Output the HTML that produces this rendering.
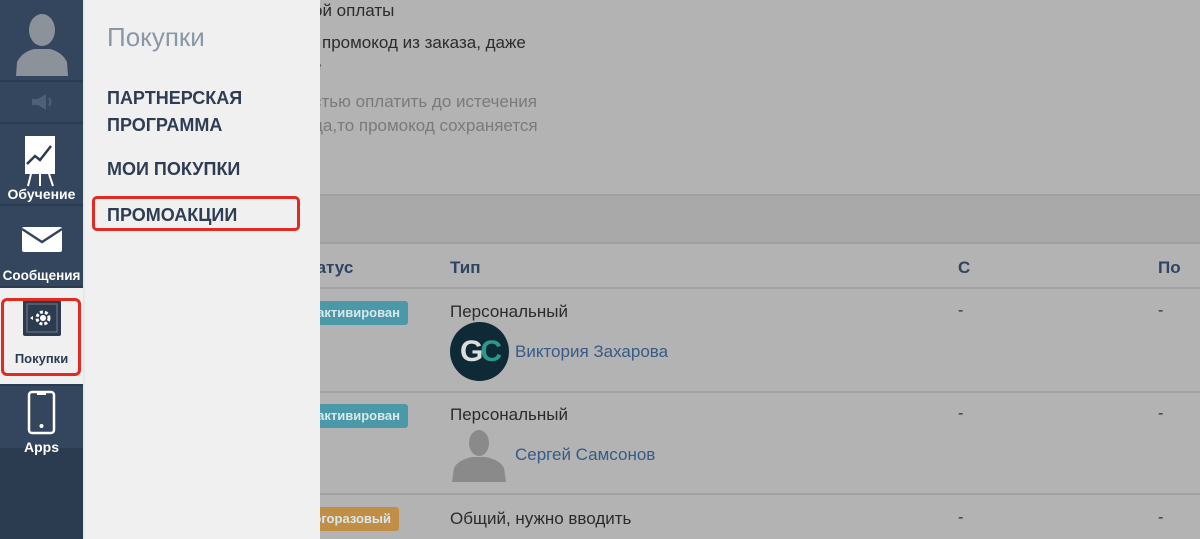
<!DOCTYPE html>
<html><head><meta charset="utf-8"><style>
*{margin:0;padding:0;box-sizing:border-box}
body{width:1200px;height:539px;overflow:hidden;background:#b3b3b3;font-family:"Liberation Sans",sans-serif;position:relative;color:#2b2b2b}
.a{position:absolute;white-space:nowrap}
.t{font-size:17px}
.g{color:#7a7a7a}
.hl{position:absolute;left:0;right:0;height:2px;background:#a2a2a2}
.badge{position:absolute;height:24px;border-radius:3px;color:#d8e8ec;font-weight:bold;font-size:13px;line-height:24px;padding:0 8px 0 0;text-align:right}
.h{color:#2d4563;font-weight:bold;font-size:17px}
#side{position:absolute;left:0;top:0;width:83px;height:539px;background:#2c3c50}
.si{position:absolute;left:0;width:83px;background:#33465d;text-align:center;color:#fff;font-weight:bold;font-size:14px}
#panel{position:absolute;left:83px;top:0;width:237px;height:539px;background:#f0f0f0;border-left:2px solid #e8e8e8}
.m{position:absolute;left:22px;font-weight:bold;font-size:18px;color:#2e3d52}
</style></head><body>
<div class="a t" style="left:313px;top:1px">ой оплаты</div>
<div class="a t" style="left:322px;top:33px">промокод из заказа, даже</div>
<div class="a t" style="left:312px;top:56px">е</div>
<div class="a t g" style="left:313px;top:92px">стью оплатить до истечения</div>
<div class="a t g" style="left:313px;top:116px">да,то промокод сохраняется</div>
<div style="position:absolute;left:0;right:0;top:194px;height:50px;background:#a9a9a9;border-top:2px solid #a0a0a0;border-bottom:2px solid #a0a0a0"></div>
<div class="a h" style="left:296px;top:258px">Статус</div>
<div class="a h" style="left:450px;top:258px">Тип</div>
<div class="a h" style="left:958px;top:258px">С</div>
<div class="a h" style="left:1158px;top:258px">По</div>
<div class="hl" style="top:287px"></div>
<div class="badge" style="left:300px;top:301px;width:108px;background:#4a98a8">активирован</div>
<div class="a t" style="left:450px;top:302px">Персональный</div>
<div style="position:absolute;left:450px;top:322px;width:59px;height:59px;border-radius:50%;background:#0e2a36;color:#ddd;font-weight:bold;font-size:30px;line-height:59px;text-align:center;letter-spacing:-3px">G<span style="color:#2a9b8a">C</span></div>
<div class="a t" style="left:515px;top:342px;color:#365b86">Виктория Захарова</div>
<div class="a" style="left:958px;top:302px">-</div><div class="a" style="left:1158px;top:302px">-</div>
<div class="hl" style="top:391px"></div>
<div class="badge" style="left:300px;top:404px;width:108px;background:#4a98a8">активирован</div>
<div class="a t" style="left:450px;top:405px">Персональный</div>
<svg style="position:absolute;left:450px;top:428px" width="58" height="54"><ellipse cx="29" cy="15" rx="10" ry="13" fill="#8a8a8a"/><path d="M2 54 L4 40 Q8 32 22 29 L36 29 Q50 32 54 40 L56 54Z" fill="#8a8a8a"/></svg>
<div class="a t" style="left:515px;top:445px;color:#365b86">Сергей Самсонов</div>
<div class="a" style="left:958px;top:405px">-</div><div class="a" style="left:1158px;top:405px">-</div>
<div class="hl" style="top:493px"></div>
<div class="badge" style="left:300px;top:507px;width:99px;background:#c08e46">огоразовый</div>
<div class="a t" style="left:450px;top:509px">Общий, нужно вводить</div>
<div class="a" style="left:958px;top:509px">-</div><div class="a" style="left:1158px;top:509px">-</div>

<div id="side">
<div class="si" style="top:0;height:80px"><svg width="56" height="66" style="margin-top:12px"><ellipse cx="28" cy="18" rx="13" ry="16" fill="#8c9299"/><path d="M2 64 L3 50 Q8 40 20 37 L36 37 Q48 40 53 50 L54 64Z" fill="#8c9299"/></svg></div>
<div class="si" style="top:82px;height:40px"><svg width="30" height="20" style="margin-top:10px"><rect x="5" y="7" width="6" height="6" fill="#4e6077"/><path d="M11 7 L19 2 L19 18 L11 13Z" fill="#4e6077"/><path d="M22 6 Q25 10 22 14" stroke="#4e6077" fill="none" stroke-width="2"/></svg></div>
<div class="si" style="top:124px;height:80px"><svg width="36" height="56" style="margin-top:10px;display:block;margin-left:23px"><rect x="2" y="2" width="30" height="38" fill="#fff"/><path d="M4 30 L12 22 L17 26 L28 12" stroke="#2c3c50" stroke-width="2.5" fill="none"/><path d="M8 40 L5 52 M17 40 L17 52 M26 40 L30 52" stroke="#fff" stroke-width="2"/></svg><div style="position:absolute;top:62px;width:83px">Обучение</div></div>
<div class="si" style="top:206px;height:80px"><svg width="42" height="28" style="margin-top:20px"><rect x="1" y="1" width="40" height="25" rx="2" fill="#fff"/><path d="M1 3 L21 16 L41 3" stroke="#33465d" stroke-width="2.5" fill="none"/></svg><div style="position:absolute;top:62px;width:83px;font-size:13.5px">Сообщения</div></div>
<div class="si" style="top:288px;height:96px;background:#f0f0f0;color:#2c3c50"><div style="position:absolute;left:1px;top:10px;width:80px;height:78px;border:3px solid #e02a22;border-radius:6px"></div><svg width="40" height="40" style="margin-top:11px"><rect x="1" y="1" width="38" height="36" rx="2" fill="#2c3c50"/><rect x="5" y="5" width="30" height="28" fill="none" stroke="#778" stroke-width="1"/><circle cx="21" cy="19" r="6" fill="none" stroke="#fff" stroke-width="3" stroke-dasharray="3 2"/><circle cx="21" cy="19" r="3" fill="#fff"/><path d="M8 19 L11 17 L11 21Z" fill="#fff"/></svg><div style="position:absolute;top:63px;width:83px;font-size:13px">Покупки</div></div>
<div class="si" style="top:386px;height:62px"><svg width="30" height="46" style="margin-top:4px"><rect x="2" y="2" width="25" height="41" rx="3" fill="none" stroke="#fff" stroke-width="2.5"/><rect x="10" y="2" width="9" height="3" fill="#fff"/><circle cx="14.5" cy="36" r="2" fill="#fff"/></svg><div style="position:absolute;top:53px;width:83px">Apps</div></div>
</div>

<div id="panel">
<div class="a" style="left:22px;top:22px;font-size:26px;color:#8a97a6">Покупки</div>
<div class="m" style="top:88px">ПАРТНЕРСКАЯ</div>
<div class="m" style="top:115px">ПРОГРАММА</div>
<div class="m" style="top:159px">МОИ ПОКУПКИ</div>
<div style="position:absolute;left:7px;top:196px;width:208px;height:35px;border:3px solid #e02a22;border-radius:5px"></div>
<div class="m" style="top:205px">ПРОМОАКЦИИ</div>
</div>
</body></html>
